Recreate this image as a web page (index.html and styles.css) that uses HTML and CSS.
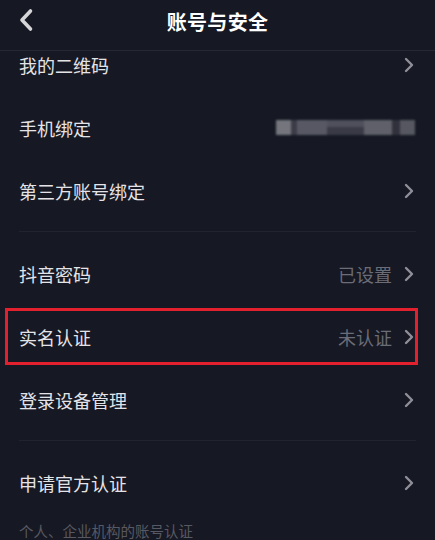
FILE: index.html
```html
<!DOCTYPE html>
<html lang="zh-CN">
<head>
<meta charset="utf-8">
<title>账号与安全</title>
<link rel="stylesheet" href="styles.css">
</head>
<body>
<div class="screen">
  <header class="topbar">
    <span class="back">
      <svg width="16" height="24" viewBox="0 0 16 24"><path d="M12.5 3 L4 12 L12.5 21" fill="none" stroke="#d6d6da" stroke-width="3.6" stroke-linecap="round" stroke-linejoin="round"/></svg>
    </span>
    <h1 class="title">账号与安全</h1>
  </header>
  <div class="viewport">
    <div class="list">
      <div class="row"><span class="label">我的二维码</span><span class="right"><svg class="chev" width="10" height="16" viewBox="0 0 10 16"><path d="M2 2 L8 8 L2 14" /></svg></span></div>
      <div class="row"><span class="label">手机绑定</span>
        <span class="masked">
          <i class="m1"></i><i class="m2"></i><i class="m3"></i><i class="m4"></i><i class="m5"></i><i class="m6"></i><i class="m7"></i>
        </span>
      </div>
      <div class="row"><span class="label">第三方账号绑定</span><span class="right"><svg class="chev" width="10" height="16" viewBox="0 0 10 16"><path d="M2 2 L8 8 L2 14" /></svg></span></div>
      <div class="sep"><div class="line"></div></div>
      <div class="row"><span class="label">抖音密码</span><span class="right"><span class="value">已设置</span><svg class="chev" width="10" height="16" viewBox="0 0 10 16"><path d="M2 2 L8 8 L2 14" /></svg></span></div>
      <div class="row highlighted"><span class="label">实名认证</span><span class="right"><span class="value">未认证</span><svg class="chev" width="10" height="16" viewBox="0 0 10 16"><path d="M2 2 L8 8 L2 14" /></svg></span><span class="mark"></span></div>
      <div class="row"><span class="label">登录设备管理</span><span class="right"><svg class="chev" width="10" height="16" viewBox="0 0 10 16"><path d="M2 2 L8 8 L2 14" /></svg></span></div>
      <div class="sep"><div class="line"></div></div>
      <div class="row"><span class="label">申请官方认证</span><span class="right"><svg class="chev" width="10" height="16" viewBox="0 0 10 16"><path d="M2 2 L8 8 L2 14" /></svg></span></div>
      <p class="note">个人、企业机构的账号认证</p>
    </div>
  </div>
</div>
</body>
</html>
```

FILE: styles.css
```css
html, body {
  margin: 0;
  padding: 0;
  background: #161823;
}
body {
  font-family: "Noto Sans CJK SC", "Noto Sans", sans-serif;
  color: #e4e4e8;
}
.screen {
  width: 435px;
  height: 540px;
  overflow: hidden;
  background: #161823;
  display: flex;
  flex-direction: column;
}
.topbar {
  height: 50px;
  flex: 0 0 50px;
  border-bottom: 1px solid #262833;
  display: flex;
  align-items: center;
  justify-content: center;
  position: relative;
}
.back {
  position: absolute;
  left: 18px;
  top: 8px;
  width: 16px;
  height: 24px;
  display: block;
}
.back svg { display: block; }
.title {
  margin: 0;
  margin-top: -8px;
  font-size: 20px;
  font-weight: 700;
  color: #ffffff;
  letter-spacing: 0.3px;
}
.viewport {
  flex: 1;
  overflow: hidden;
}
.list {
  margin-top: -18px;
}
.row {
  height: 63px;
  padding: 0 21px 0 19px;
  display: flex;
  align-items: center;
  justify-content: space-between;
  position: relative;
}
.label {
  font-size: 18px;
  color: #e4e4e8;
  line-height: 1;
}
.right {
  display: flex;
  align-items: center;
  gap: 12px;
}
.value {
  font-size: 18px;
  color: #6b6c76;
  line-height: 1;
}
.chev {
  display: block;
}
.chev path {
  fill: none;
  stroke: #8e8f98;
  stroke-width: 2.4;
  stroke-linecap: round;
  stroke-linejoin: round;
}
.sep {
  padding: 9px 19px 10px 19px;
}
.line {
  height: 1px;
  background: #21232e;
}
.masked {
  display: flex;
  height: 15px;
  margin-right: -1px;
  filter: blur(0.8px);
}
.masked i { display: block; height: 15px; }
.m1 { width: 15px; background: #74757d; }
.m2 { width: 6px; background: #3b3c47; }
.m3 { width: 30px; background: #575863; }
.m4 { width: 37px; background: linear-gradient(#4f505b 0 45%, #393a45 45% 100%); }
.m5 { width: 28px; background: #5f606a; }
.m6 { width: 8px; background: #30313c; }
.m7 { width: 15px; background: #565760; }
.mark {
  position: absolute;
  left: 5px;
  right: 17px;
  top: 3px;
  bottom: 3px;
  border: 3px solid #e3202d;
  pointer-events: none;
}
.note {
  margin: 0;
  padding: 7px 19px 0 19px;
  font-size: 14.5px;
  line-height: 20px;
  color: #575862;
}
```
